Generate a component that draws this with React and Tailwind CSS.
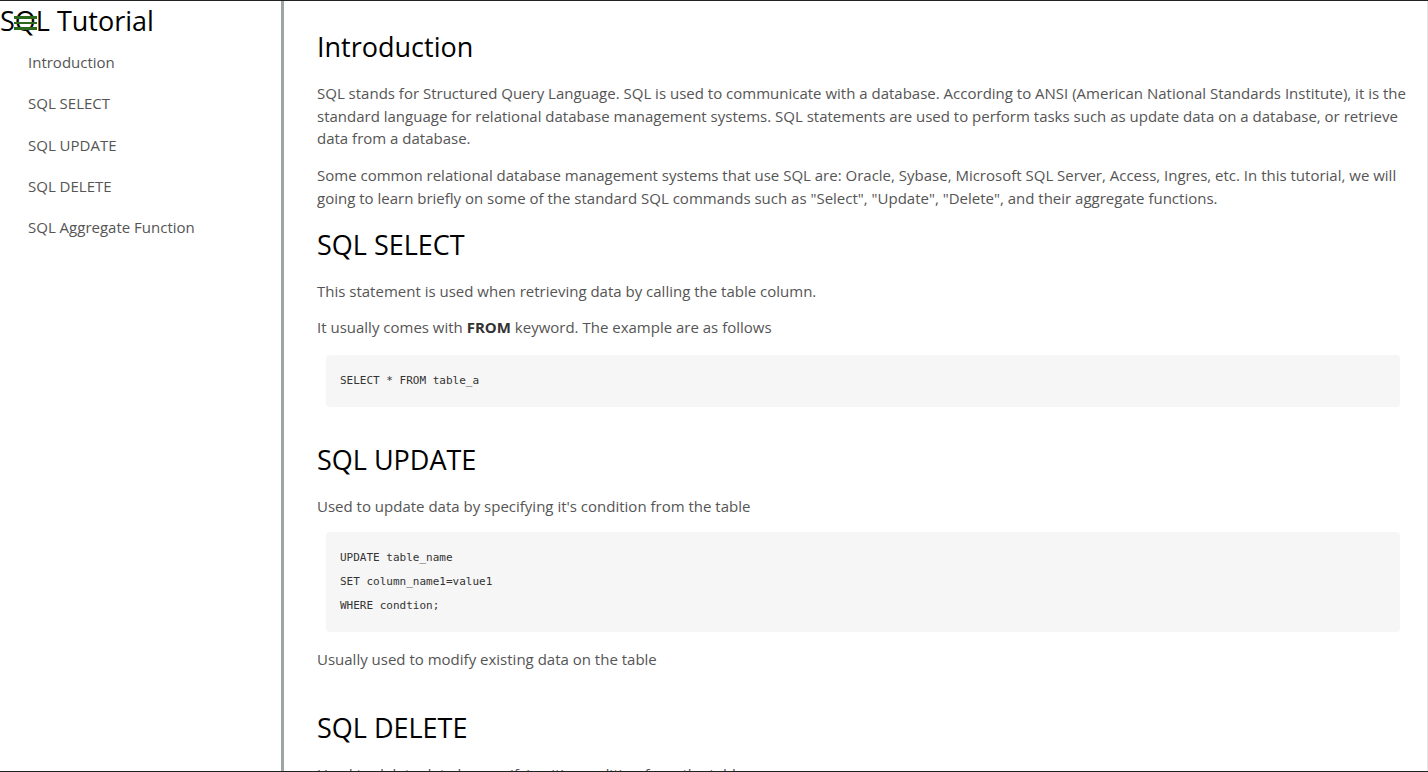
import React from 'react'

const links = ['Introduction', 'SQL SELECT', 'SQL UPDATE', 'SQL DELETE', 'SQL Aggregate Function']

function Code({ lines, className = '' }) {
  return (
    <pre className={`mx-[9px] rounded-[4px] bg-[#f6f6f6] px-[14px] py-[14px] text-[11px] leading-[24px] text-[#333] ${className}`} style={{ fontFamily: '"DejaVu Sans Mono", "Liberation Mono", monospace' }}>
      {lines.map((l, i) => (
        <div key={i}>{l}</div>
      ))}
    </pre>
  )
}

export default function App() {
  return (
    <div className="box-border flex h-[772px] w-full overflow-hidden border-y border-[#222] bg-white" style={{ fontFamily: '"Open Sans", "Noto Sans", sans-serif' }}>
      {/* Sidebar */}
      <aside className="relative w-[281px] shrink-0">
        <h1 className="mt-[4px] text-[27px] leading-[31px] font-normal text-black">SQL Tutorial</h1>
        <div className="absolute left-[14px] top-[15px] flex w-[23px] flex-col gap-[3px]">
          <span className="h-[2.5px] bg-[#2b6a1c]" />
          <span className="h-[2.5px] bg-[#2b6a1c]" />
          <span className="h-[2.5px] bg-[#2b6a1c]" />
        </div>
        <nav className="mt-[6px] flex flex-col">
          {links.map((l) => (
            <a key={l} href="#" className="pl-[28px] text-[15px] leading-[41.25px] text-[#555]">
              {l}
            </a>
          ))}
        </nav>
      </aside>
      <div className="w-[3px] shrink-0 bg-[#9da6a2]" />

      {/* Main */}
      <main className="flex flex-1 flex-col overflow-hidden border-r border-[#e6e6e6] pl-[33px] pr-[18px] pt-[30px] text-[15px] leading-[22.5px] text-[#555]">
        <h1 className="text-[27px] leading-[31px] text-black">Introduction</h1>
        <p className="mt-[20px]">
          SQL stands for Structured Query Language. SQL is used to communicate with a database. According to ANSI (American National Standards Institute), it is the standard language for relational database management systems. SQL statements are used to perform tasks such as update data on a database, or retrieve data from a database.
        </p>
        <p className="mt-[14.5px]">
          Some common relational database management systems that use SQL are: Oracle, Sybase, Microsoft SQL Server, Access, Ingres, etc. In this tutorial, we will going to learn briefly on some of the standard SQL commands such as "Select", "Update", "Delete", and their aggregate functions.
        </p>

        <h2 className="mt-[20px] text-[27px] leading-[31px] text-black">SQL SELECT</h2>
        <p className="mt-[20px]">This statement is used when retrieving data by calling the table column.</p>
        <p className="mt-[13.5px]">
          It usually comes with <b className="font-bold text-[#333]">FROM</b> keyword. The example are as follows
        </p>
        <Code className="mt-[16.5px]" lines={['SELECT * FROM table_a']} />

        <h2 className="mt-[36.5px] text-[27px] leading-[31px] text-black">SQL UPDATE</h2>
        <p className="mt-[20px]">Used to update data by specifying it's condition from the table</p>
        <Code className="mt-[15px]" lines={['UPDATE table_name', 'SET column_name1=value1', 'WHERE condtion;']} />
        <p className="mt-[15.5px]">Usually used to modify existing data on the table</p>

        <h2 className="mt-[42px] text-[27px] leading-[31px] text-black">SQL DELETE</h2>
        <p className="mt-[20px]">Used to delete data by specifying it's condition from the table</p>
      </main>
    </div>
  )
}
